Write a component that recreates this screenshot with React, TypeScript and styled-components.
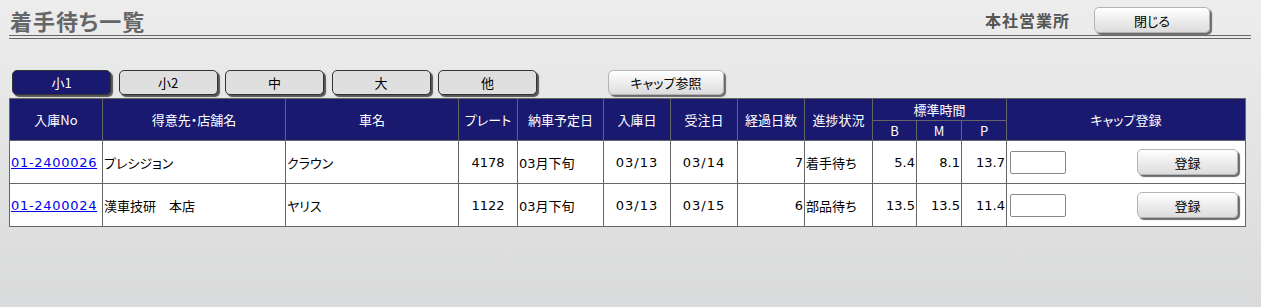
import React from "react";
import styled, { createGlobalStyle } from "styled-components";

const GlobalStyle = createGlobalStyle`
    html, body {
        margin: 0;
        padding: 0;
    }
    body {
        min-height: 307px;
        background: linear-gradient(#ededed, #d9dadb);
        font-family: "Noto Sans CJK JP", "DejaVu Sans", sans-serif;
        font-feature-settings: "palt";
        color: #000;
    }
`;

const Page = styled.div`
    padding: 6px 10px 0 9px;
`;

const TitleBar = styled.div`
    display: flex;
    align-items: center;
    height: 28px;
    padding-left: 1px;
`;

const Title = styled.h1`
    margin: 0;
    font-size: 22px;
    font-weight: bold;
    color: #666;
    letter-spacing: 1px;
`;

const Office = styled.span`
    margin-left: auto;
    margin-right: 24px;
    font-size: 16px;
    font-weight: bold;
    color: #555;
    letter-spacing: 1px;
`;

const GrayButton = styled.button<{ $w: number }>`
    width: ${(p) => p.$w}px;
    height: 26px;
    padding: 0;
    border: 1px solid #b4b4b4;
    border-radius: 5px;
    background: linear-gradient(#ffffff, #dcdcdc);
    box-shadow: 2px 2px 1px #6a6a6a;
    font-family: "Noto Sans CJK JP", sans-serif;
    font-feature-settings: "palt";
    font-size: 13px;
    color: #000;
    cursor: pointer;
`;

const CloseButton = styled(GrayButton)`
    margin-right: 41px;
`;

const DoubleRule = styled.div`
    height: 2px;
    margin-top: 1px;
    border-top: 1px solid #666;
    border-bottom: 1px solid #666;
`;

const TabBar = styled.div`
    display: flex;
    align-items: flex-start;
    gap: 7.5px;
    height: 27px;
    margin-top: 31px;
    padding-left: 3px;
`;

const Tab = styled.button<{ $active?: boolean }>`
    width: 99px;
    height: 25px;
    padding: 0;
    border: 1px solid #333;
    border-radius: 5px;
    background: ${(p) => (p.$active ? "#191970" : "#dfdfdf")};
    color: ${(p) => (p.$active ? "#fff" : "#000")};
    box-shadow: 2px 2px 1px #555;
    font-family: "Noto Sans CJK JP", sans-serif;
    font-size: 13px;
    cursor: pointer;
`;

const CapRefButton = styled(GrayButton)`
    margin-left: 63.5px;
    height: 25px;
`;

const Table = styled.table`
    border-collapse: collapse;
    width: 1236px;
    margin-top: 1px;
    table-layout: fixed;
    background: #fff;
    font-size: 13px;
`;

const Th = styled.th<{ $h?: number }>`
    background: #191970;
    color: #fff;
    font-weight: normal;
    border: 1px solid #666;
    padding: 0;
    height: ${(p) => p.$h || 20}px;
    font-size: 13px;
    text-align: center;
    white-space: nowrap;
`;

const Td = styled.td<{ $align?: "left" | "center" | "right"; $spaced?: boolean }>`
    border: 1px solid #666;
    height: 42px;
    padding: 0 1px;
    text-align: ${(p) => p.$align || "left"};
    vertical-align: middle;
    white-space: nowrap;
    font-family: "DejaVu Sans", "Noto Sans CJK JP", sans-serif;
    font-size: 13px;
    letter-spacing: ${(p) => (p.$spaced ? "1px" : "0")};
`;

const JpText = styled.span`
    font-family: "Noto Sans CJK JP", sans-serif;
`;

const NoLink = styled.a`
    color: #0000ee;
    text-decoration: underline;
    letter-spacing: 0.7px;
`;

const CapCell = styled.div`
    display: flex;
    align-items: center;
    justify-content: space-between;
    padding-left: 2px;
    padding-right: 6px;
`;

const CapInput = styled.input`
    width: 56px;
    height: 23px;
    box-sizing: border-box;
    border: 1px solid #8a8a8a;
    border-radius: 2px;
    background: #fff;
`;

type Row = {
    no: string;
    customer: string;
    car: string;
    plate: string;
    due: string;
    inDate: string;
    orderDate: string;
    days: number;
    status: string;
    b: string;
    m: string;
    p: string;
};

const rows: Row[] = [
    {
        no: "01-2400026",
        customer: "プレシジョン",
        car: "クラウン",
        plate: "4178",
        due: "03月下旬",
        inDate: "03/13",
        orderDate: "03/14",
        days: 7,
        status: "着手待ち",
        b: "5.4",
        m: "8.1",
        p: "13.7",
    },
    {
        no: "01-2400024",
        customer: "漢車技研\u3000本店",
        car: "ヤリス",
        plate: "1122",
        due: "03月下旬",
        inDate: "03/13",
        orderDate: "03/15",
        days: 6,
        status: "部品待ち",
        b: "13.5",
        m: "13.5",
        p: "11.4",
    },
];

const tabs = ["小1", "小2", "中", "大", "他"];

// column widths, border to border, as in the list
const colWidths = [93, 183, 173, 59, 86, 67, 67, 67, 68, 44, 45, 45, 239];

export default function App() {
    return (
        <Page>
            <GlobalStyle />
            <TitleBar>
                <Title>着手待ち一覧</Title>
                <Office>本社営業所</Office>
                <CloseButton $w={116}>閉じる</CloseButton>
            </TitleBar>
            <DoubleRule />
            <TabBar>
                {tabs.map((t, i) => (
                    <Tab key={t} $active={i === 0}>
                        {t}
                    </Tab>
                ))}
                <CapRefButton $w={116}>キャップ参照</CapRefButton>
            </TabBar>
            <Table>
                <colgroup>
                    {colWidths.map((w, i) => (
                        <col key={i} style={{ width: w }} />
                    ))}
                </colgroup>
                <thead>
                    <tr>
                        <Th rowSpan={2}>入庫No</Th>
                        <Th rowSpan={2}>得意先・店舗名</Th>
                        <Th rowSpan={2}>車名</Th>
                        <Th rowSpan={2}>プレート</Th>
                        <Th rowSpan={2}>納車予定日</Th>
                        <Th rowSpan={2}>入庫日</Th>
                        <Th rowSpan={2}>受注日</Th>
                        <Th rowSpan={2}>経過日数</Th>
                        <Th rowSpan={2}>進捗状況</Th>
                        <Th colSpan={3} $h={21}>標準時間</Th>
                        <Th rowSpan={2}>キャップ登録</Th>
                    </tr>
                    <tr>
                        <Th $h={19}>B</Th>
                        <Th $h={19}>M</Th>
                        <Th $h={19}>P</Th>
                    </tr>
                </thead>
                <tbody>
                    {rows.map((r) => (
                        <tr key={r.no}>
                            <Td>
                                <NoLink href="#">{r.no}</NoLink>
                            </Td>
                            <Td>
                                <JpText>{r.customer}</JpText>
                            </Td>
                            <Td>
                                <JpText>{r.car}</JpText>
                            </Td>
                            <Td $align="center">{r.plate}</Td>
                            <Td>{r.due}</Td>
                            <Td $align="center" $spaced>{r.inDate}</Td>
                            <Td $align="center" $spaced>{r.orderDate}</Td>
                            <Td $align="right">{r.days}</Td>
                            <Td>
                                <JpText>{r.status}</JpText>
                            </Td>
                            <Td $align="right">{r.b}</Td>
                            <Td $align="right">{r.m}</Td>
                            <Td $align="right">{r.p}</Td>
                            <Td>
                                <CapCell>
                                    <CapInput type="text" />
                                    <GrayButton $w={101}>登録</GrayButton>
                                </CapCell>
                            </Td>
                        </tr>
                    ))}
                </tbody>
            </Table>
        </Page>
    );
}
